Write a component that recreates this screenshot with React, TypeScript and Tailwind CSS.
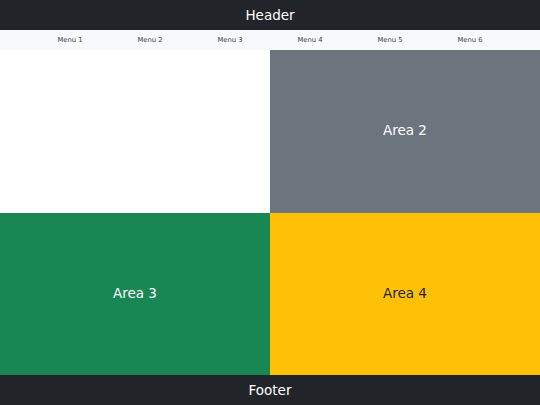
export default function App() {
  const menus = ["Menu 1", "Menu 2", "Menu 3", "Menu 4", "Menu 5", "Menu 6"];
  return (
    <div className="flex h-[405px] w-[540px] flex-col" style={{ fontFamily: '"DejaVu Sans", sans-serif' }}>
      <header className="flex h-[30px] items-center justify-center bg-[#212529] text-[13.5px] text-white">
        Header
      </header>
      <nav className="flex h-[20px] items-center justify-center bg-[#f8f9fa] pt-px">
        {menus.map((m) => (
          <div key={m} className="w-[80px] text-center text-[6.75px] text-[#3d4247]">
            {m}
          </div>
        ))}
      </nav>
      <main className="grid flex-1 grid-cols-2 grid-rows-2">
        <div className="bg-white" />
        <div className="flex items-center justify-center bg-[#6c757d] pb-[2px] text-[13.5px] text-white">Area 2</div>
        <div className="flex items-center justify-center bg-[#198754] pb-[2px] text-[13.5px] text-white">Area 3</div>
        <div className="flex items-center justify-center bg-[#ffc107] pb-[2px] text-[13.5px] text-[#212529]">Area 4</div>
      </main>
      <footer className="flex h-[30px] items-center justify-center bg-[#212529] text-[13.5px] text-white">
        Footer
      </footer>
    </div>
  );
}
